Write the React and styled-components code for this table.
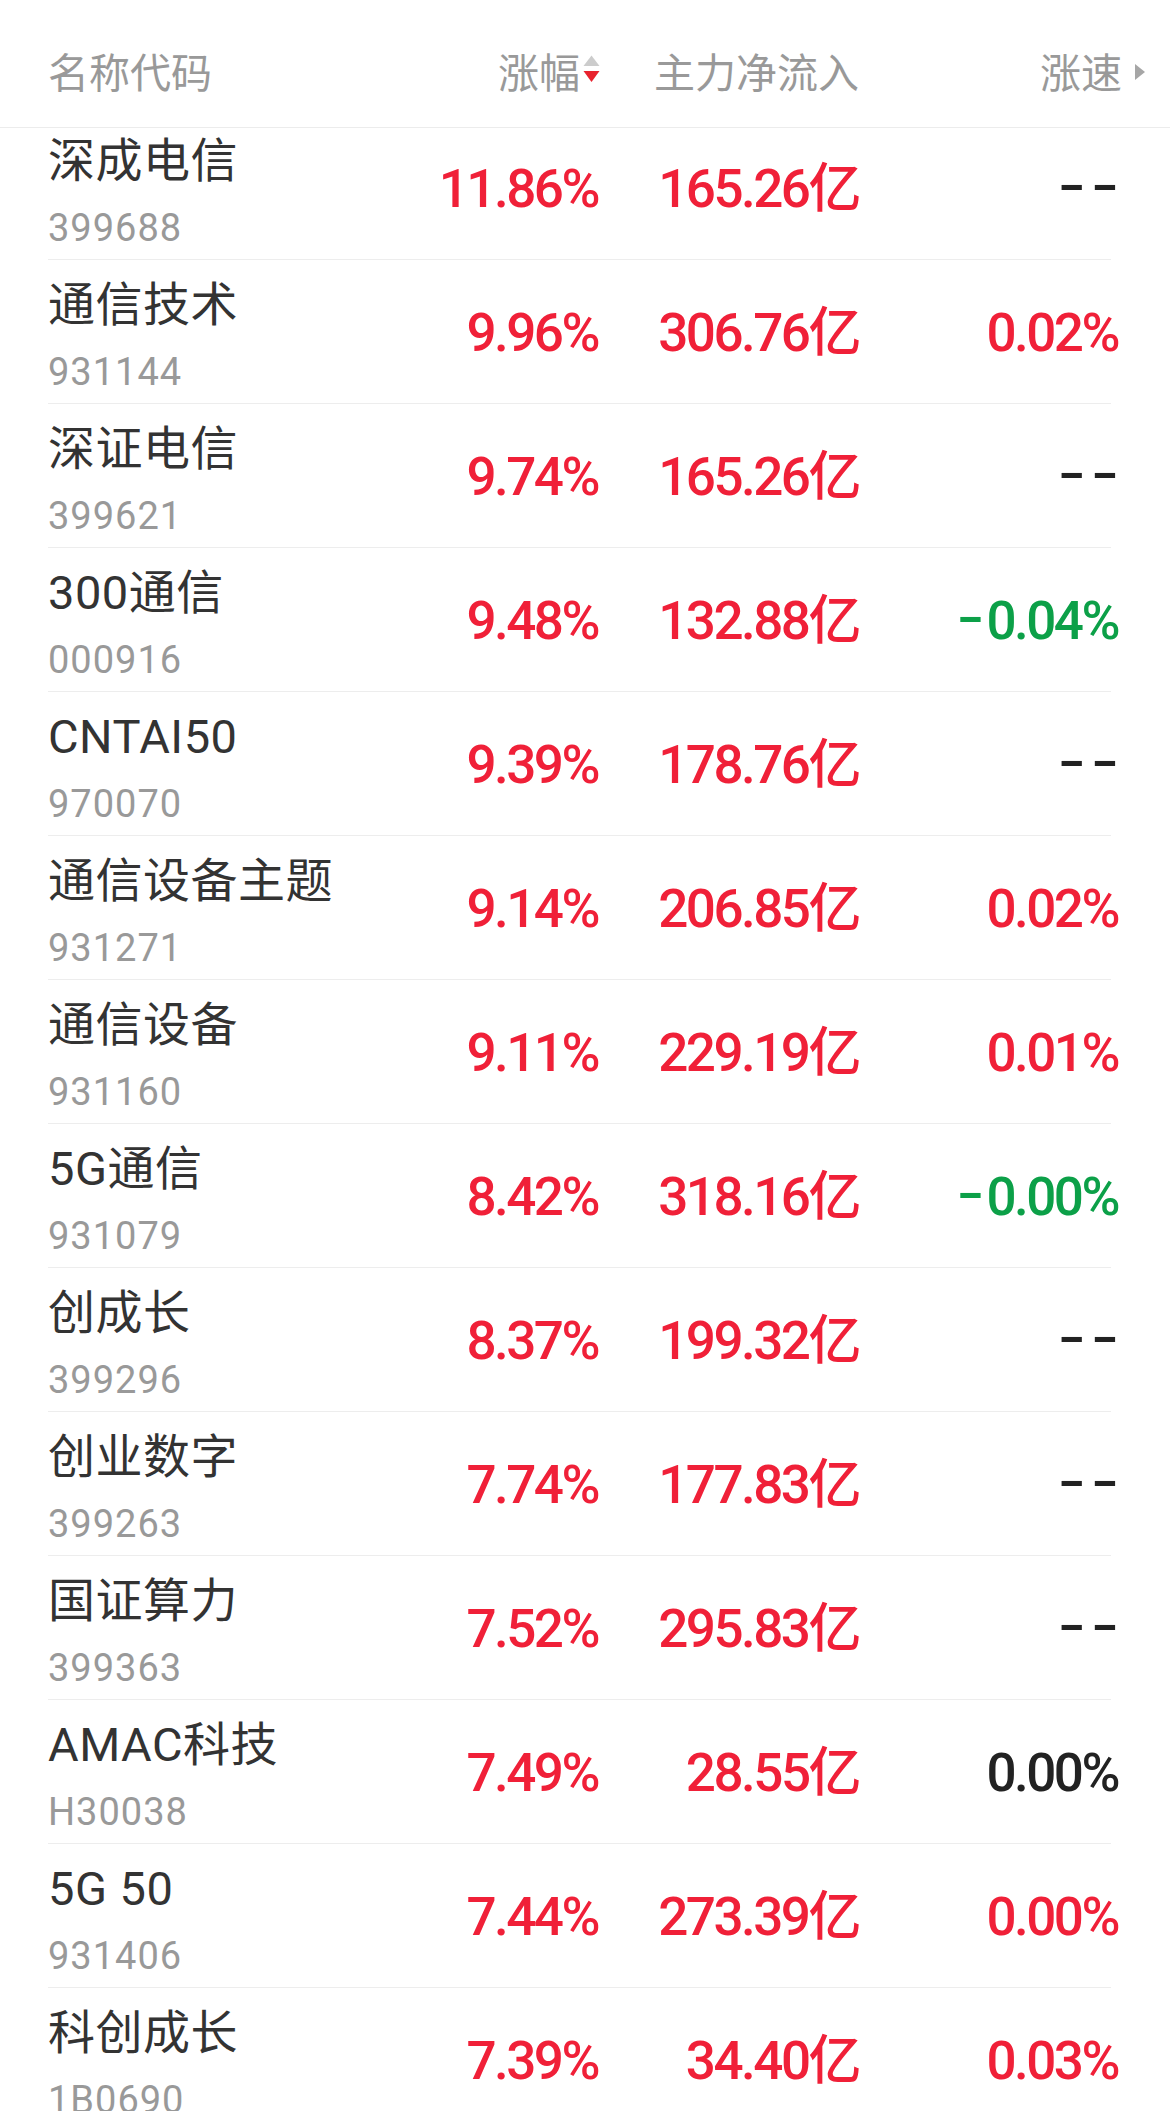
import React from 'react'
import styled, { createGlobalStyle } from 'styled-components'

const GlobalStyle = createGlobalStyle`
  html, body {
    margin: 0;
    padding: 0;
    background: #ffffff;
  }
  * {
    box-sizing: border-box;
  }
`

const rows = [
  { name: '深成电信', code: '399688', chg: '11.86%', flow: '165.26亿', speed: '--', tone: 'flat' },
  { name: '通信技术', code: '931144', chg: '9.96%', flow: '306.76亿', speed: '0.02%', tone: 'up' },
  { name: '深证电信', code: '399621', chg: '9.74%', flow: '165.26亿', speed: '--', tone: 'flat' },
  { name: '300通信', code: '000916', chg: '9.48%', flow: '132.88亿', speed: '-0.04%', tone: 'down' },
  { name: 'CNTAI50', code: '970070', chg: '9.39%', flow: '178.76亿', speed: '--', tone: 'flat' },
  { name: '通信设备主题', code: '931271', chg: '9.14%', flow: '206.85亿', speed: '0.02%', tone: 'up' },
  { name: '通信设备', code: '931160', chg: '9.11%', flow: '229.19亿', speed: '0.01%', tone: 'up' },
  { name: '5G通信', code: '931079', chg: '8.42%', flow: '318.16亿', speed: '-0.00%', tone: 'down' },
  { name: '创成长', code: '399296', chg: '8.37%', flow: '199.32亿', speed: '--', tone: 'flat' },
  { name: '创业数字', code: '399263', chg: '7.74%', flow: '177.83亿', speed: '--', tone: 'flat' },
  { name: '国证算力', code: '399363', chg: '7.52%', flow: '295.83亿', speed: '--', tone: 'flat' },
  { name: 'AMAC科技', code: 'H30038', chg: '7.49%', flow: '28.55亿', speed: '0.00%', tone: 'flat' },
  { name: '5G 50', code: '931406', chg: '7.44%', flow: '273.39亿', speed: '0.00%', tone: 'up' },
  { name: '科创成长', code: '1B0690', chg: '7.39%', flow: '34.40亿', speed: '0.03%', tone: 'up' },
]

const toneColor = {
  up: '#f02038',
  down: '#0ca048',
  flat: '#222222',
}

const Page = styled.div`
  width: 1170px;
  height: 2111px;
  overflow: hidden;
  background: #ffffff;
  display: flex;
  flex-direction: column;
`

const HeaderBar = styled.div`
  flex: 0 0 128px;
  height: 128px;
  padding-top: 12px;
  border-bottom: 1px solid #ececec;
  display: flex;
  align-items: center;
  background: #ffffff;
`

const HeaderGrid = styled.div`
  margin-left: 48px;
  display: grid;
  grid-template-columns: 290px 262px 259px 286px;
  align-items: center;
  font-family: "Noto Sans CJK SC", sans-serif;
  font-size: 41px;
  line-height: 56px;
  color: #999999;
`

const HeaderCell = styled.div`
  display: flex;
  align-items: center;
  justify-content: ${(p) => (p.$left ? 'flex-start' : 'flex-end')};
  gap: ${(p) => p.$gap || 0}px;
  white-space: nowrap;
`

const SortIcon = styled.svg`
  display: block;
  width: 17px;
  height: 28px;
  margin-top: -2px;
`

const MoreIcon = styled.svg`
  display: block;
  width: 10px;
  height: 16px;
  margin-top: 4px;
`

const Viewport = styled.div`
  flex: 1;
  overflow: hidden;
`

const List = styled.div`
  margin-top: -12px;
`

const Row = styled.div`
  height: 144px;
  margin: 0 59px 0 48px;
  border-bottom: 1px solid #ededed;
  display: grid;
  grid-template-columns: 290px 260px 261px 259px;
  align-items: center;
`

const NameCell = styled.div`
  display: flex;
  flex-direction: column;
  padding: 19px 0 12px;
  white-space: nowrap;
`

const Name = styled.div`
  font-family: Roboto, "Noto Sans CJK SC", sans-serif;
  font-size: 47px;
  line-height: 52px;
  letter-spacing: 0.5px;
  color: #333333;
`

const Code = styled.div`
  margin-top: 20px;
  font-family: Roboto, "Noto Sans CJK SC", sans-serif;
  font-size: 38px;
  line-height: 42px;
  letter-spacing: 1px;
  color: #999999;
`

const Value = styled.div`
  text-align: right;
  white-space: nowrap;
  font-family: Roboto, "Noto Sans CJK SC", sans-serif;
  font-weight: 500;
  font-size: 53px;
  line-height: 62px;
  letter-spacing: -2.5px;
  color: ${(p) => toneColor[p.$tone]};
`

const Dash = styled.span`
  display: inline-block;
  letter-spacing: 4.4px;
  margin-right: -7px;
  transform: translateY(-3px) scaleX(1.48);
  transform-origin: right center;
`

const Minus = styled.span`
  display: inline-block;
  letter-spacing: 0;
  margin-left: 9px;
  margin-right: 2px;
  transform: translateY(-3px) scaleX(1.48);
  transform-origin: right center;
`

const renderSpeed = (text) => {
  if (text === '--') return <Dash>--</Dash>
  if (text.startsWith('-')) {
    return (
      <>
        <Minus>-</Minus>
        {text.slice(1)}
      </>
    )
  }
  return text
}

const App = () => {
  return (
    <Page>
      <GlobalStyle />
      <HeaderBar>
        <HeaderGrid>
          <HeaderCell $left>名称代码</HeaderCell>
          <HeaderCell $gap={3}>
            涨幅
            <SortIcon viewBox="0 0 17 28">
              <path d="M0.5 11 L8.5 0.5 L16.5 11 Z" fill="#cccccc" />
              <path d="M0.5 16 L16.5 16 L8.5 27 Z" fill="#e8232e" />
            </SortIcon>
          </HeaderCell>
          <HeaderCell>主力净流入</HeaderCell>
          <HeaderCell $gap={13}>
            涨速
            <MoreIcon viewBox="0 0 10 16">
              <path d="M0 0 L10 8 L0 16 Z" fill="#a6a6a6" />
            </MoreIcon>
          </HeaderCell>
        </HeaderGrid>
      </HeaderBar>
      <Viewport>
        <List>
          {rows.map((r) => (
            <Row key={r.code}>
              <NameCell>
                <Name>{r.name}</Name>
                <Code>{r.code}</Code>
              </NameCell>
              <Value $tone="up">{r.chg}</Value>
              <Value $tone="up">{r.flow}</Value>
              <Value $tone={r.tone}>{renderSpeed(r.speed)}</Value>
            </Row>
          ))}
        </List>
      </Viewport>
    </Page>
  )
}

export default App
